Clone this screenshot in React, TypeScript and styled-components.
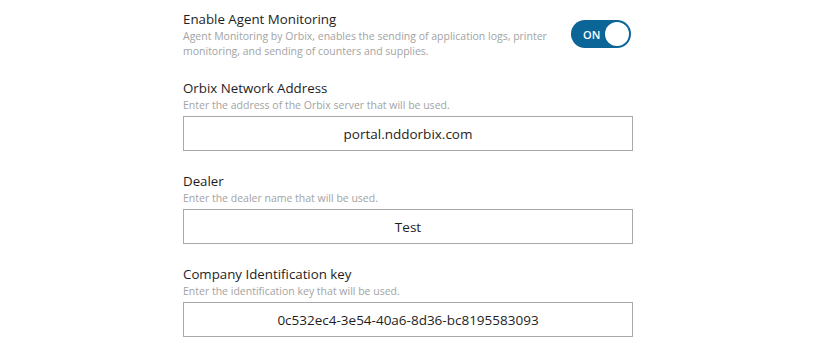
import React from "react";
import styled, { createGlobalStyle } from "styled-components";

const Global = createGlobalStyle`
  html, body { margin: 0; padding: 0; background: #ffffff; }
  body { font-family: "Open Sans", "Noto Sans", Arial, sans-serif; }
`;

const Page = styled.div`
  width: 450px;
  margin-left: 183px;
  padding-top: 9px;
  display: flex;
  flex-direction: column;
`;

const ToggleRow = styled.div`
  display: flex;
  align-items: center;
  justify-content: space-between;
  margin-bottom: 19px;
`;

const TextBlock = styled.div`
  display: flex;
  flex-direction: column;
`;

const Label = styled.div`
  font-size: 13.3px;
  line-height: 20px;
  color: #1e1e1e;
`;

const Hint = styled.div`
  font-size: 10.5px;
  line-height: 15px;
  color: #a3a3a3;
`;

const Field = styled.div`
  display: flex;
  flex-direction: column;
  margin-bottom: 20px;
`;

const Box = styled.div`
  margin-top: 3px;
  height: 33px;
  border: 1px solid #a9a9ad;
  display: flex;
  align-items: center;
  justify-content: center;
  font-size: 13.5px;
  color: #1e1e1e;
`;

const Switch = styled.div<{ $on: boolean }>`
  width: 60px;
  height: 28px;
  margin-right: 2px;
  border-radius: 14px;
  background: ${(p) => (p.$on ? "#0b6597" : "#bbbbbb")};
  display: flex;
  align-items: center;
  justify-content: space-between;
  padding: 0 2px 0 12px;
  box-sizing: border-box;
`;

const SwitchText = styled.span`
  color: #ffffff;
  font-size: 11px;
  font-weight: 600;
`;

const Knob = styled.span`
  width: 24px;
  height: 24px;
  border-radius: 50%;
  background: #ffffff;
`;

const fields = [
  {
    label: "Orbix Network Address",
    hint: "Enter the address of the Orbix server that will be used.",
    value: "portal.nddorbix.com",
  },
  {
    label: "Dealer",
    hint: "Enter the dealer name that will be used.",
    value: "Test",
  },
  {
    label: "Company Identification key",
    hint: "Enter the identification key that will be used.",
    value: "0c532ec4-3e54-40a6-8d36-bc8195583093",
  },
];

export default function App() {
  return (
    <>
      <Global />
      <Page>
        <ToggleRow>
          <TextBlock>
            <Label>Enable Agent Monitoring</Label>
            <Hint>
              Agent Monitoring by Orbix, enables the sending of application logs, printer
              <br />
              monitoring, and sending of counters and supplies.
            </Hint>
          </TextBlock>
          <Switch $on>
            <SwitchText>ON</SwitchText>
            <Knob />
          </Switch>
        </ToggleRow>
        {fields.map((f) => (
          <Field key={f.label}>
            <Label>{f.label}</Label>
            <Hint>{f.hint}</Hint>
            <Box>{f.value}</Box>
          </Field>
        ))}
      </Page>
    </>
  );
}
